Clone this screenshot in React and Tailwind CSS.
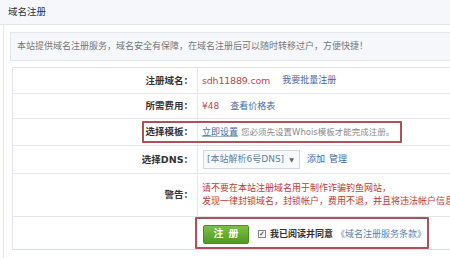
import React from 'react';

const font = "font-['DejaVu_Sans','Noto_Sans_CJK_SC',sans-serif]";

function Row({ label, height, children, extra = '' }) {
  return (
    <div className={`relative flex border-b border-[#e3e6ec] ${height} ${extra}`}>
      <div className="w-[185px] shrink-0 border-r border-[#e3e6ec] flex items-center justify-end pr-[4px] text-[9.5px] font-bold text-[#333]">
        {label}
      </div>
      <div className="flex-1 flex items-center pl-[4px] text-[9px]">{children}</div>
    </div>
  );
}

export default function App() {
  return (
    <div className={`w-[450px] h-[258px] overflow-hidden bg-white ${font} leading-none`}>
      {/* Header */}
      <div className="h-[25px] bg-[#f5f7fa] border-b border-[#e3e6eb] flex items-center px-[8px] text-[9.5px] text-[#333]">
        域名注册
      </div>

      {/* Body */}
      <div className="ml-[3px] w-[490px] h-[240px] border-l border-[#e3e6eb] pl-[6px] pt-[7px]">
        <div className="h-[29px] bg-[#f5f7fb] border border-[#e3e7ed] flex items-center px-[6px] text-[9px] text-[#777] whitespace-nowrap">
          本站提供域名注册服务，域名安全有保障，在域名注册后可以随时转移过户，方便快捷！
        </div>

        <div className="mt-[6px] ml-[2px] border border-[#e0e4ea] border-b-[#d8dce3] whitespace-nowrap">
          <Row label="注册域名：" height="h-[26px]">
            <span className="text-[#c0474a] text-[9.5px] tracking-[-0.2px]">sdh11889.com</span>
            <span className="ml-[12px] text-[#3d6aa6]">我要批量注册</span>
          </Row>
          <Row label="所需费用：" height="h-[25px]">
            <span className="text-[#c0474a]">¥48</span>
            <span className="ml-[11px] text-[#3d6aa6]">查看价格表</span>
          </Row>
          <Row label="选择模板：" height="h-[27px]">
            <span className="text-[#3d6aa6] underline decoration-[#9bb1cf]">立即设置</span>
            <span className="ml-[3px] text-[8.5px] text-[#8a8a8a]">您必须先设置Whois模板才能完成注册。</span>
            <div className="absolute left-[129px] top-[2px] w-[260px] h-[22px] border-2 border-[#b0505a] rounded-[1px]" />
          </Row>
          <Row label="选择DNS：" height="h-[28px]">
            <div className="ml-[1px] h-[19px] w-[97px] border border-[#cfd6df] bg-[#f7fafc] flex items-center px-[3px] text-[#5b82ad]">
              [本站解析6号DNS]
              <span className="ml-[5px] text-[6px] text-[#666]">▼</span>
            </div>
            <span className="ml-[7px] text-[#3d6aa6]">添加</span>
            <span className="ml-[4px] text-[#3d6aa6]">管理</span>
          </Row>
          <Row label="警告：" height="h-[43px]">
            <div className="flex flex-col gap-[4px] text-[#c33a2e] text-[9px] leading-[9px] -mt-[1px]">
              <span>请不要在本站注册域名用于制作诈骗钓鱼网站，</span>
              <span>发现一律封锁域名，封锁帐户，费用不退，并且将违法帐户信息</span>
            </div>
          </Row>
          <Row label="" height="h-[32px]" extra="border-b-0">
            <button className="ml-[1px] mt-[2px] h-[19px] w-[46px] rounded-[2px] bg-gradient-to-b from-[#7cc043] to-[#4f9a22] border border-[#4a8f22] text-white text-[10px] font-bold tracking-[5px] pl-[5px]">
              注册
            </button>
            <span className="ml-[9px] mt-[2px] w-[8px] h-[8px] border border-[#888] bg-[#f4f4f4] flex items-center justify-center text-[7px] font-bold text-[#222]">✓</span>
            <span className="ml-[4px] mt-[2px] font-bold text-[#333]">我已阅读并同意</span>
            <span className="ml-[3px] mt-[2px] text-[#5a7fb0]">《域名注册服务条款》</span>
            <div className="absolute left-[182px] top-[0px] w-[234px] h-[32px] border-2 border-[#b0505a] rounded-[1px]" />
          </Row>
        </div>
      </div>
    </div>
  );
}
